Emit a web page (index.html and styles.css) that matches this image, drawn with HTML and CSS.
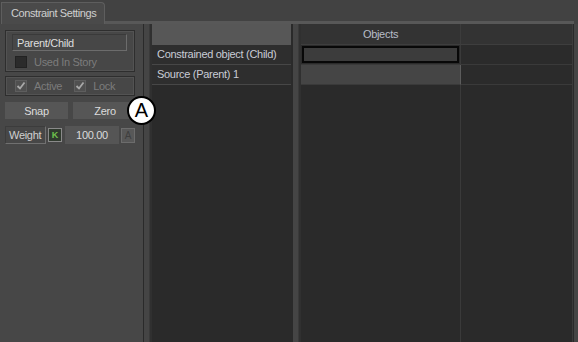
FILE: index.html
```html
<!DOCTYPE html>
<html lang="en">
<head>
    <meta charset="UTF-8">
    <title>Constraint Settings</title>
    <link rel="stylesheet" href="styles.css">
</head>
<body>
    <div class="tabbar">
        <div class="tab">Constraint Settings</div>
        <div class="tab-rest"></div>
    </div>

    <div class="main">
        <div class="left">
            <div class="group group-type">
                <div class="field">Parent/Child</div>
                <div class="check-row">
                    <span class="box box-dark"></span>
                    <span class="dim">Used In Story</span>
                </div>
            </div>

            <div class="group group-flags">
                <span class="box box-checked">
                    <svg width="10" height="10" viewBox="0 0 10 10"><polyline points="1.5,5 4,7.5 8.5,1.5" fill="none" stroke="#a8a8a8" stroke-width="1.8"/></svg>
                </span>
                <span class="dim">Active</span>
                <span class="box box-checked lock-box">
                    <svg width="10" height="10" viewBox="0 0 10 10"><polyline points="1.5,5 4,7.5 8.5,1.5" fill="none" stroke="#a8a8a8" stroke-width="1.8"/></svg>
                </span>
                <span class="dim">Lock</span>
            </div>

            <div class="buttons">
                <button class="btn btn-snap">Snap</button>
                <button class="btn btn-zero">Zero</button>
            </div>

            <div class="weight-row">
                <div class="weight-label">Weight</div>
                <div class="key-btn">K</div>
                <div class="weight-value">100.00</div>
                <div class="anim-btn">A</div>
            </div>

            <div class="callout">A</div>
        </div>

        <div class="splitter"></div>

        <div class="list">
            <div class="list-head"></div>
            <div class="list-row">Constrained object (Child)</div>
            <div class="list-row">Source (Parent) 1</div>
        </div>

        <div class="splitter splitter-wide"></div>

        <div class="grid">
            <div class="grid-head">Objects</div>
            <div class="grid-head"></div>
            <div class="cell cell-slot"><div class="slot"></div></div>
            <div class="cell"></div>
            <div class="cell cell-filled"></div>
            <div class="cell"></div>
            <div class="cell-fill"></div>
            <div class="cell-fill"></div>
        </div>

        <div class="edge"></div>
    </div>
</body>
</html>
```

FILE: styles.css
```css
html, body {
    margin: 0;
    padding: 0;
}
body {
    width: 578px;
    height: 342px;
    overflow: hidden;
    background-color: #444444;
    font-family: "Liberation Sans", Arial, sans-serif;
    font-size: 11px;
    letter-spacing: -0.3px;
    color: #d8d8d8;
}

/* tab strip */
.tabbar {
    display: flex;
    height: 24px;
    background-color: #424242;
}
.tab {
    box-sizing: border-box;
    width: 104px;
    height: 22px;
    margin-top: 2px;
    margin-left: 1px;
    padding: 4px 0 0 9px;
    background-color: #4a4a4a;
    border: 1px solid #5e5e5e;
    border-bottom: none;
    border-top-right-radius: 4px;
    color: #cfcfcf;
    letter-spacing: -0.4px;
}
.tab-rest {
    flex: 1;
    margin-right: 4px;
    border-bottom: 3px solid #585858;
}

.main {
    display: flex;
    height: 318px;
}

/* left settings panel */
.left {
    position: relative;
    width: 143px;
    background-color: #474747;
    padding-top: 6px;
    box-sizing: border-box;
}
.group {
    margin: 0 8px 0 5px;
    border: 1px solid #2e2e2e;
    box-shadow: inset 0 0 0 1px #535353;
}
.group-type {
    height: 42px;
    padding: 3px 0 0 6px;
    box-sizing: border-box;
}
.field {
    box-sizing: border-box;
    width: 115px;
    height: 17px;
    padding: 2px 0 0 4px;
    border: 1px solid #6c6c6c;
    border-top-color: #3a3a3a;
    border-left-color: #3a3a3a;
    color: #dedede;
}
.check-row {
    display: flex;
    align-items: center;
    margin-top: 5px;
    padding-left: 3px;
}
.box {
    display: inline-flex;
    align-items: center;
    justify-content: center;
    box-sizing: border-box;
    width: 12px;
    height: 12px;
    margin-right: 7px;
}
.box-dark {
    background-color: #2b2b2b;
    border: 1px solid #222222;
}
.box-checked {
    background-color: #505050;
    border: 1px solid #5e5e5e;
}
.dim {
    color: #7c7c7c;
}
.group-flags {
    display: flex;
    align-items: center;
    height: 20px;
    margin-top: 4px;
    padding-left: 9px;
    box-sizing: border-box;
}
.lock-box {
    margin-left: 12px;
}

.buttons {
    display: flex;
    gap: 5px;
    margin: 6px 0 0 5px;
}
.btn {
    height: 17px;
    padding: 0;
    border: none;
    background-color: #565656;
    color: #dcdcdc;
    font-family: "Liberation Sans", Arial, sans-serif;
    font-size: 11px;
    letter-spacing: -0.3px;
}
.btn-snap {
    width: 63px;
}
.btn-zero {
    width: 64px;
}

.weight-row {
    display: flex;
    align-items: center;
    height: 18px;
    margin: 7px 0 0 5px;
}
.weight-label {
    box-sizing: border-box;
    width: 41px;
    height: 18px;
    padding: 2px 0 0 3px;
    border: 1px solid #707070;
    border-top-color: #3c3c3c;
    border-left-color: #3c3c3c;
    color: #d0d0d0;
}
.key-btn {
    box-sizing: border-box;
    width: 14px;
    height: 14px;
    margin-left: 2px;
    border: 1px solid #8a8a8a;
    background-color: #303a2e;
    color: #6fc24c;
    font-size: 9px;
    font-weight: bold;
    text-align: center;
    line-height: 12px;
    letter-spacing: 0;
}
.weight-value {
    box-sizing: border-box;
    width: 54px;
    height: 18px;
    margin-left: 3px;
    padding-top: 3px;
    background-color: #555555;
    color: #dadada;
    text-align: center;
}
.anim-btn {
    box-sizing: border-box;
    width: 14px;
    height: 15px;
    margin-left: 2px;
    border: 1px solid #6c6c6c;
    background-color: #585858;
    color: #3e3e3e;
    font-size: 10px;
    text-align: center;
    line-height: 13px;
    letter-spacing: 0;
}

/* annotation marker over the panel edge */
.callout {
    position: absolute;
    left: 127px;
    top: 72px;
    box-sizing: border-box;
    width: 29px;
    height: 29px;
    border: 2px solid #000000;
    border-radius: 50%;
    background-color: #ffffff;
    color: #000000;
    font-size: 20px;
    letter-spacing: 0;
    text-align: center;
    line-height: 25px;
    z-index: 2;
}

/* splitters */
.splitter {
    box-sizing: border-box;
    width: 9px;
    background-color: #454545;
    border-left: 1px solid #2a2a2a;
    border-right: 2px solid #303030;
    box-shadow: inset -1px 0 0 #3a3a3a;
}
.splitter-wide {
    width: 10px;
    border-left-width: 2px;
}

/* object list */
.list {
    width: 139px;
    background-color: #2a2a2a;
}
.list-head {
    height: 21px;
    background-color: #575757;
}
.list-row {
    box-sizing: border-box;
    height: 20px;
    padding: 3px 0 0 5px;
    background-color: #2e2e2e;
    border-bottom: 1px solid #474747;
    color: #c9ccd6;
}

/* objects grid */
.grid {
    display: grid;
    grid-template-columns: 160px 112px;
    grid-template-rows: 21px 20px 20px 1fr;
    width: 273px;
    background-color: #2a2a2a;
}
.grid-head {
    box-sizing: border-box;
    padding-top: 4px;
    background-color: #333333;
    border-right: 1px solid #3c3c3c;
    border-bottom: 1px solid #3e3e3e;
    color: #b8bdc8;
    text-align: center;
}
.cell {
    box-sizing: border-box;
    background-color: #2b2b2b;
    border-right: 1px solid #3a3a3a;
    border-bottom: 1px solid #3a3a3a;
}
.cell-slot {
    padding: 1px;
}
.slot {
    box-sizing: border-box;
    height: 100%;
    background-color: #3c3c3c;
    border: 2px solid #080808;
}
.cell-filled {
    background-color: #454545;
    border-right: 1px solid #5c5c5c;
}
.cell-fill {
    border-right: 1px solid #3a3a3a;
}

.edge {
    width: 4px;
    background-color: #454545;
}
```
